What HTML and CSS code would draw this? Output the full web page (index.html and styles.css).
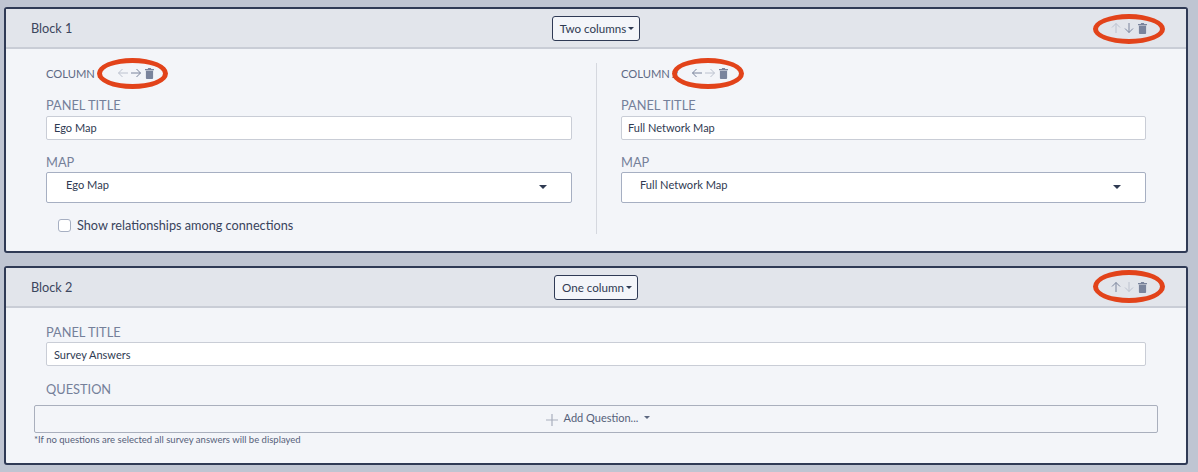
FILE: index.html
```html
<!DOCTYPE html>
<html lang="en">
<head>
<meta charset="utf-8">
<title>Blocks</title>
<link rel="stylesheet" href="styles.css">
</head>
<body>
<svg class="defs" width="0" height="0" aria-hidden="true">
  <symbol id="left" viewBox="0 0 12 12"><path d="M11 6H1.5M5.5 2 1.5 6l4 4" fill="none" stroke="currentColor" stroke-width="1"/></symbol>
  <symbol id="right" viewBox="0 0 12 12"><path d="M1 6h9.5M6.5 2l4 4-4 4" fill="none" stroke="currentColor" stroke-width="1"/></symbol>
  <symbol id="up" viewBox="0 0 12 12"><path d="M6 11V1.5M2 5.5l4-4 4 4" fill="none" stroke="currentColor" stroke-width="1"/></symbol>
  <symbol id="down" viewBox="0 0 12 12"><path d="M6 1v9.5M2 6.5l4 4 4-4" fill="none" stroke="currentColor" stroke-width="1"/></symbol>
  <symbol id="trash" viewBox="0 0 10 12"><path d="M3.5 0h3l.5 1h3v1.3H0V1h3zM1 3h8v8a1 1 0 0 1-1 1H2a1 1 0 0 1-1-1z" fill="currentColor"/></symbol>
</svg>

<section class="block block-one">
  <header class="block-head">
    <span class="block-name">Block 1</span>
    <button class="layout-btn">Two columns<i class="caret"></i></button>
    <span class="tools head-tools">
      <svg class="ic faint"><use href="#up"/></svg>
      <svg class="ic"><use href="#down"/></svg>
      <svg class="tr"><use href="#trash"/></svg>
    </span>
    <span class="ring ring-head"></span>
  </header>
  <div class="cols">
    <div class="col col-left">
      <div class="col-head">
        <span class="col-label">Column 1</span>
        <span class="tools col-tools">
          <svg class="ic faint"><use href="#left"/></svg>
          <svg class="ic"><use href="#right"/></svg>
          <svg class="tr"><use href="#trash"/></svg>
        </span>
        <span class="ring ring-col ring-col-a"></span>
      </div>
      <label class="field-label">Panel Title</label>
      <input class="text-input" value="Ego Map">
      <label class="field-label map-label">Map</label>
      <div class="select"><span>Ego Map</span><i class="caret big"></i></div>
      <div class="check"><span class="box"></span>Show relationships among connections</div>
    </div>
    <div class="col col-right">
      <div class="col-head">
        <span class="col-label">Column 2</span>
        <span class="tools col-tools">
          <svg class="ic"><use href="#left"/></svg>
          <svg class="ic faint"><use href="#right"/></svg>
          <svg class="tr"><use href="#trash"/></svg>
        </span>
        <span class="ring ring-col ring-col-b"></span>
      </div>
      <label class="field-label">Panel Title</label>
      <input class="text-input" value="Full Network Map">
      <label class="field-label map-label">Map</label>
      <div class="select"><span>Full Network Map</span><i class="caret big"></i></div>
    </div>
  </div>
</section>

<section class="block block-two">
  <header class="block-head">
    <span class="block-name">Block 2</span>
    <button class="layout-btn">One column<i class="caret"></i></button>
    <span class="tools head-tools">
      <svg class="ic"><use href="#up"/></svg>
      <svg class="ic faint"><use href="#down"/></svg>
      <svg class="tr"><use href="#trash"/></svg>
    </span>
    <span class="ring ring-head ring-low"></span>
  </header>
  <div class="single">
    <label class="field-label title-label">Panel Title</label>
    <input class="text-input wide" value="Survey Answers">
    <label class="field-label q-label">Question</label>
    <button class="add-q"><svg class="plus" viewBox="0 0 12 12"><path d="M6 0v12M0 6h12" stroke="currentColor" stroke-width="1.2"/></svg>Add Question...<i class="caret grey"></i></button>
    <p class="hint">*If no questions are selected all survey answers will be displayed</p>
  </div>
</section>
</body>
</html>
```
FILE: styles.css
```css
* { box-sizing: border-box; }
html, body { margin: 0; height: 472px; overflow: hidden; }
body {
  background: #bfc5d2;
  padding: 7px 0 0 4px;
  font-family: Lato, "Liberation Sans", sans-serif;
  color: #2f3a52;
}
.defs { position: absolute; }
.block {
  width: 1184px;
  background: #f3f5f9;
  border: 2px solid #2f3a55;
  border-radius: 3px;
}
.block-one { height: 246px; }
.block-two { height: 199px; margin-top: 13px; }
.block-head {
  position: relative;
  height: 40px;
  display: grid;
  grid-template-columns: 1fr auto 1fr;
  align-items: center;
  background: #e2e5eb;
  border-bottom: 2px solid #c9cdd6;
  padding: 0 25px;
}
.block-name { font-size: 12.7px; color: #3c465d; }
.layout-btn {
  height: 25px;
  padding: 0 5px 0 7px;
  background: #f3f5f9;
  border: 1px solid #2f3a55;
  border-radius: 3px;
  font: 11.6px Lato, sans-serif;
  color: #2f3a52;
  display: flex;
  align-items: center;
}
.caret {
  display: inline-block;
  margin-left: 2px;
  border-top: 3px solid currentColor;
  border-left: 3px solid transparent;
  border-right: 3px solid transparent;
}
.caret.big { border-top-width: 4px; border-left-width: 4px; border-right-width: 4px; margin: 0; }
.caret.grey { color: #5d6880; margin-left: 6px; }
.tools { display: flex; align-items: center; color: #7a849c; }
.head-tools { justify-self: end; gap: 1px; margin-right: 14px; }
.ic { width: 12px; height: 12px; }
.tr { width: 9px; height: 11px; margin-left: 2px; }
.faint { color: #bcc2cf; }
.ring {
  position: absolute;
  border: 5px solid #e2431a;
  border-radius: 50%;
  pointer-events: none;
}
.ring-head { left: 1087px; top: 5px; width: 72px; height: 30px; }
.ring-low { top: 2px; height: 33px; }
.cols { display: flex; padding: 14px 0 0; }
.col-left { padding: 0 24px 0 40px; width: 591px; height: 171px; border-right: 1px solid #d5d8df; }
.col-right { padding: 0 40px 0 24px; width: 589px; }
.col-head {
  position: relative;
  height: 20px;
  display: flex;
  align-items: center;
}
.col-label { font-size: 11.2px; word-spacing: -1px; text-transform: uppercase; color: #5e6a85; width: 71px; }
.col-right .col-label { width: 70px; }
.col-tools { gap: 1px; }
.ring-col { top: -5px; height: 31px; left: 51px; }
.ring-col-a { width: 71px; }
.ring-col-b { width: 72px; }
.field-label {
  display: block;
  margin: 12px 0 2px;
  height: 19px;
  line-height: 21px;
  font-size: 12.8px;
  text-transform: uppercase;
  color: #75809a;
}
.text-input {
  display: block;
  width: 100%;
  height: 24px;
  padding: 0 7px 2px;
  background: #fff;
  border: 1px solid #c9cdd6;
  border-radius: 2px;
  font: 11px Lato, sans-serif;
  color: #2f3a52;
}
.col-right .text-input { padding-left: 6px; }
.map-label { margin: 12px 0 1px; }
.select {
  display: flex;
  justify-content: space-between;
  align-items: center;
  height: 31px;
  padding: 0 24px 6px 19px;
  background: #fff;
  border: 1px solid #a6afc2;
  border-radius: 2px;
  font-size: 11.1px;
  color: #2f3a52;
}
.col-right .select { padding-left: 18px; }
.select .caret { margin-top: 4px; }
.check {
  display: flex;
  align-items: center;
  gap: 6px;
  margin: 14px 0 0 12px;
  font-size: 12.7px;
  color: #39445c;
}
.box {
  width: 13px;
  height: 13px;
  background: #fff;
  border: 1px solid #a6afc2;
  border-radius: 3px;
}
.single { padding: 14px 0 0 28px; }
.title-label { margin: 0 0 1px 12px; }
.text-input.wide { width: 1100px; margin-left: 12px; padding-bottom: 0; }
.q-label { margin: 13px 0 7px 12px; }
.add-q {
  display: flex;
  align-items: center;
  justify-content: center;
  width: 1124px;
  height: 28px;
  padding: 0 0 3px 4px;
  background: #f3f5f9;
  border: 1px solid #a9afbd;
  border-radius: 2px;
  font: 11px Lato, sans-serif;
  color: #56617a;
}
.plus { width: 12px; height: 12px; margin: 4px 6px 0 0; color: #a9afbd; }
.hint { margin: 0; font-size: 9.5px; line-height: 14px; color: #56617a; }
```
